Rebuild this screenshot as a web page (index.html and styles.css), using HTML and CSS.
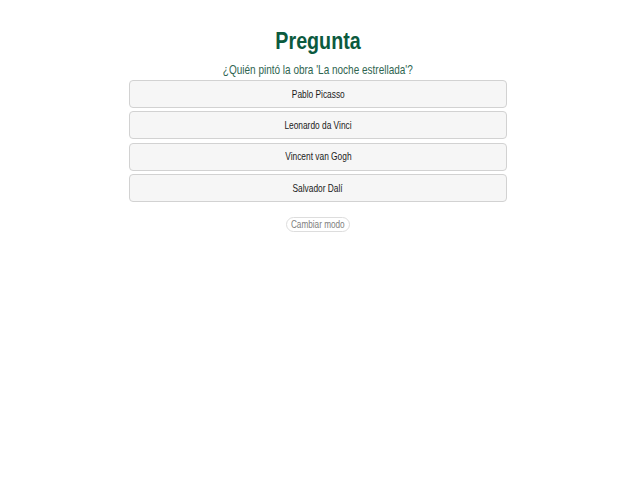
FILE: index.html
```html
<!DOCTYPE html>
<html lang="es">
<head>
<meta charset="utf-8">
<title>Pregunta</title>
<link rel="stylesheet" href="styles.css">
</head>
<body>
<main class="quiz">
  <h1 class="title"><span class="narrow">Pregunta</span></h1>
  <p class="question"><span class="narrow">¿Quién pintó la obra 'La noche estrellada'?</span></p>
  <div class="options">
    <button class="option"><span class="narrow">Pablo Picasso</span></button>
    <button class="option"><span class="narrow">Leonardo da Vinci</span></button>
    <button class="option"><span class="narrow">Vincent van Gogh</span></button>
    <button class="option"><span class="narrow">Salvador Dalí</span></button>
  </div>
  <button class="mode"><span class="narrow">Cambiar modo</span></button>
</main>
</body>
</html>
```
FILE: styles.css
```css
html, body { margin: 0; padding: 0; background: #fff; }
body { font-family: "Liberation Sans", Arial, sans-serif; }
.narrow {
  display: inline-block;
  transform: scaleX(0.82);
  transform-origin: center;
  white-space: nowrap;
}
.quiz {
  width: 378px;
  margin: 0 auto;
  padding-top: 26px;
  display: flex;
  flex-direction: column;
  align-items: center;
  transform: translateX(-2px);
}
.title {
  margin: 0;
  font-size: 24px;
  font-weight: bold;
  color: #0b5a3e;
  line-height: 30px;
}
.question {
  margin: 6px 0 2px;
  font-size: 12.2px;
  color: #2f6550;
  line-height: 16px;
}
.options {
  width: 100%;
  display: flex;
  flex-direction: column;
  gap: 3.4px;
}
.option {
  height: 28px;
  width: 100%;
  background: #f6f6f6;
  border: 1px solid #d2d2d2;
  border-radius: 4px;
  font-family: inherit;
  font-size: 10.2px;
  color: #1a1a1a;
  cursor: pointer;
}
.mode {
  margin-top: 15px;
  width: 64px;
  height: 15px;
  padding: 0;
  background: #fff;
  border: 1px solid #ddd;
  border-radius: 8px;
  font-family: inherit;
  font-size: 10px;
  color: #808080;
}
.mode .narrow { margin: 0 -8px; }
```
